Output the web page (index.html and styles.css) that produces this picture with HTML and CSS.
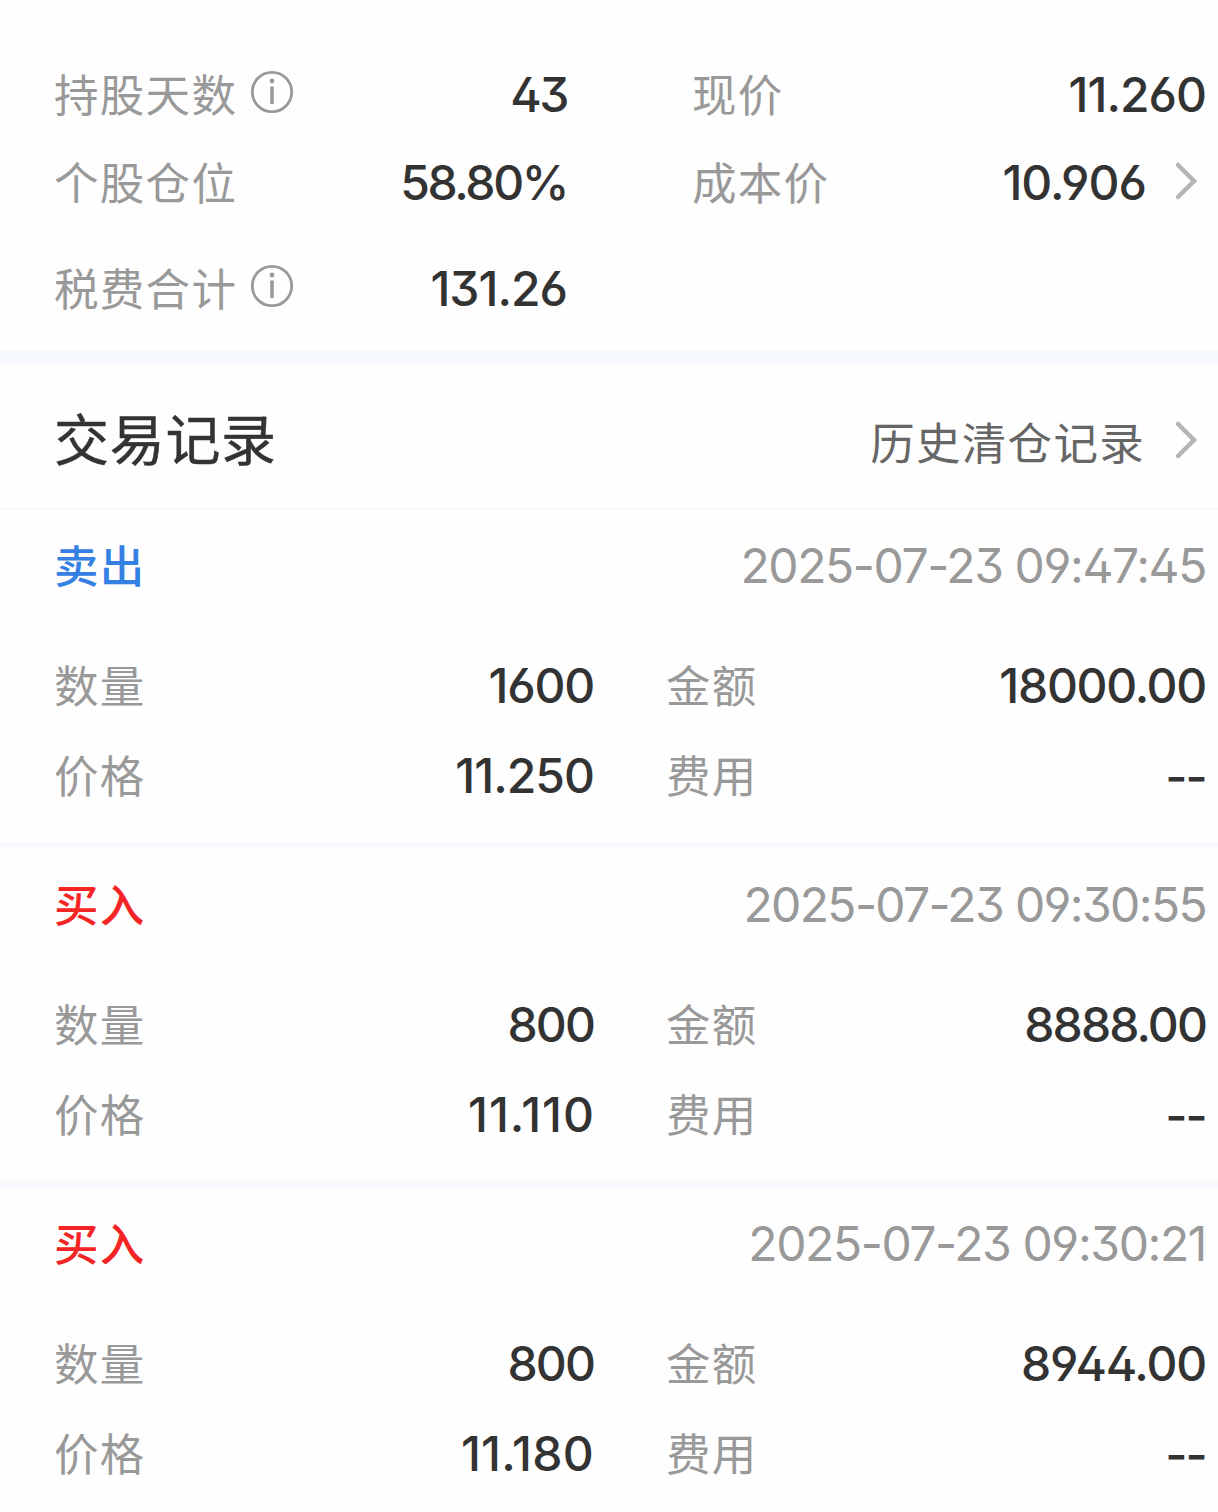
FILE: index.html
```html
<!DOCTYPE html>
<html lang="zh-CN">
<head>
<meta charset="utf-8">
<title>交易记录</title>
<link rel="stylesheet" href="styles.css">
</head>
<body>
<main class="page">
  <section class="summary">
    <div class="row">
      <div class="cell">
        <span class="label">持股天数</span>
        <svg class="info" viewBox="0 0 44 44"><circle cx="22" cy="22" r="19.7"/><path d="M22 16.500V34"/><circle class="dot" cx="22" cy="11" r="2.4"/></svg>
        <span class="value wide">43</span>
      </div>
      <div class="cell"><span class="label">现价</span><span class="value price">11.260</span></div>
    </div>
    <div class="row">
      <div class="cell"><span class="label">个股仓位</span><span class="value percent">58.80%</span></div>
      <div class="cell">
        <span class="label">成本价</span><span class="value price">10.906</span>
        <svg class="chevron" viewBox="0 0 24 40"><path d="M4 4 20 20 4 36"/></svg>
      </div>
    </div>
    <div class="row row-fee">
      <div class="cell">
        <span class="label">税费合计</span>
        <svg class="info" viewBox="0 0 44 44"><circle cx="22" cy="22" r="19.7"/><path d="M22 16.500V34"/><circle class="dot" cx="22" cy="11" r="2.4"/></svg>
        <span class="value price">131.26</span>
      </div>
    </div>
  </section>
  <header class="heading">
    <h1 class="title">交易记录</h1>
    <a class="history">历史清仓记录</a>
    <svg class="chevron" viewBox="0 0 24 40"><path d="M4 4 20 20 4 36"/></svg>
  </header>
  <section class="record">
    <div class="record-head"><span class="side sell">卖出</span><time class="time">2025-07-23 09:47:45</time></div>
    <div class="row">
      <div class="cell"><span class="label">数量</span><span class="value">1600</span></div>
      <div class="cell"><span class="label">金额</span><span class="value amount">18000.00</span></div>
    </div>
    <div class="row">
      <div class="cell"><span class="label">价格</span><span class="value price">11.250</span></div>
      <div class="cell"><span class="label">费用</span><span class="value dashes">--</span></div>
    </div>
  </section>
  <section class="record">
    <div class="record-head"><span class="side buy">买入</span><time class="time tight">2025-07-23 09:30:55</time></div>
    <div class="row">
      <div class="cell"><span class="label">数量</span><span class="value tight">800</span></div>
      <div class="cell"><span class="label">金额</span><span class="value tight">8888.00</span></div>
    </div>
    <div class="row">
      <div class="cell"><span class="label">价格</span><span class="value loose">11.110</span></div>
      <div class="cell"><span class="label">费用</span><span class="value dashes">--</span></div>
    </div>
  </section>
  <section class="record">
    <div class="record-head"><span class="side buy">买入</span><time class="time">2025-07-23 09:30:21</time></div>
    <div class="row">
      <div class="cell"><span class="label">数量</span><span class="value tight">800</span></div>
      <div class="cell"><span class="label">金额</span><span class="value">8944.00</span></div>
    </div>
    <div class="row">
      <div class="cell"><span class="label">价格</span><span class="value relaxed">11.180</span></div>
      <div class="cell"><span class="label">费用</span><span class="value dashes">--</span></div>
    </div>
  </section>
</main>
</body>
</html>
```
FILE: styles.css
```css
* { box-sizing: border-box; }
body {
  margin: 0;
  background: #fefefe;
  font-family: Inter, "Noto Sans CJK SC", sans-serif;
}
.page { width: 1218px; height: 1512px; overflow: hidden; }

/* Two-column label/value rows */
.row {
  display: grid;
  grid-template-columns: 540px 540px;
  justify-content: space-between;
  height: 90px;
  white-space: nowrap;
}
.cell { display: flex; align-items: center; }
.label, .side, .history {
  font-family: "Noto Sans CJK SC", sans-serif;
  font-size: 44.5px;
  letter-spacing: 1.3px;
  line-height: 60px;
}
.label { padding-bottom: 4px; color: #999; }
.value {
  flex: 1;
  text-align: right;
  font-size: 48px;
  font-weight: 500;
  letter-spacing: -1.2px;
  line-height: 60px;
  color: #333;
  font-feature-settings: "ss01" 1;
}
.value.wide { letter-spacing: -2.5px; }
.value.price { letter-spacing: -1px; }
.value.loose { margin-right: -1px; letter-spacing: 1px; }
.value.relaxed { letter-spacing: 0.3px; }
.value.percent { letter-spacing: -2.4px; }
.value.amount { letter-spacing: -1.3px; }
.value.tight { letter-spacing: -1.9px; }
.value.dashes { letter-spacing: -1.8px; padding-top: 2px; }

/* Position summary */
.summary {
  height: 364px;
  padding: 51px 12px 0 54px;
  border-bottom: 14px solid #f6faff;
}
.summary .row { grid-template-columns: 513px 514px; height: 88px; }
.summary .row-fee { margin-top: 18px; }
.info {
  flex: none;
  width: 44px;
  height: 44px;
  margin: -6px 0 0 13px;
  fill: none;
  stroke: #999;
  stroke-width: 2.8;
}
.info path { stroke-width: 3.6; }
.info .dot { fill: #999; stroke: none; }
.chevron {
  flex: none;
  width: 24px;
  height: 40px;
  margin: -4px 8px 0 28px;
  fill: none;
  stroke: #b5b5b5;
  stroke-width: 4.5;
  stroke-linecap: round;
}

/* Trade records */
.heading {
  display: flex;
  align-items: center;
  height: 146px;
  padding: 8px 12px 0 54px;
  border-bottom: 2px solid #f8f9fd;
}
.title {
  flex: 1;
  margin: 0;
  padding-bottom: 9px;
  font: 400 55px/70px "Noto Sans CJK SC", sans-serif;
  letter-spacing: 0.7px;
  -webkit-text-stroke: 0.5px #333;
  color: #333;
}
.heading .chevron { margin-top: -1px; margin-left: 29px; }
.history { padding-top: 1px; color: #666; }
.record { height: 339px; padding: 0 12px 0 54px; border-bottom: 7px solid #f7f9ff; }
.record-head {
  display: flex;
  align-items: center;
  justify-content: space-between;
  height: 131px;
  padding-bottom: 20px;
}
.side { padding-bottom: 4px; font-weight: 500; }
.sell { color: #3480e3; }
.buy { color: #f52525; }
.time {
  color: #999;
  font-size: 48px;
  letter-spacing: -1.4px;
  font-feature-settings: "ss01" 1;
}
.time.tight { letter-spacing: -1.65px; }
```
